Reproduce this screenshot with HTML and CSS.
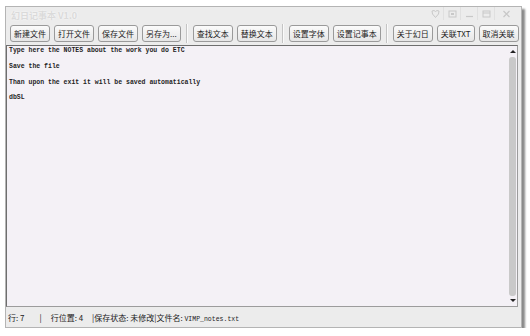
FILE: index.html
```html
<!DOCTYPE html>
<html lang="zh-CN">
<head>
<meta charset="UTF-8">
<title>幻日记事本 V1.0</title>
<link rel="stylesheet" href="styles.css">
</head>
<body>
<div class="window">
  <div class="titlebar">
    <span class="title">幻日记事本 V1.0</span>
    <div class="controls">
      <span class="ctl">
        <svg width="9" height="8" viewBox="0 0 9 8"><path d="M1 1 L3 0.5 L4.5 1.5 L6 0.5 L8 1 L7.5 4 L4.5 7.5 L1.5 4 Z" fill="none" stroke="#c8c8c8" stroke-width="1"/></svg>
      </span>
      <span class="ctl">
        <svg width="9" height="8" viewBox="0 0 9 8"><rect x="1" y="1" width="7" height="6" fill="none" stroke="#c8c8c8"/><rect x="3" y="3" width="3" height="2" fill="#c8c8c8"/></svg>
      </span>
      <span class="ctl">
        <svg width="9" height="8" viewBox="0 0 9 8"><path d="M1 6.5 H8" stroke="#c8c8c8" stroke-width="1.2"/></svg>
      </span>
      <span class="ctl">
        <svg width="9" height="8" viewBox="0 0 9 8"><rect x="1" y="1" width="7" height="6" fill="none" stroke="#c8c8c8"/><path d="M1 3 H8" stroke="#c8c8c8"/></svg>
      </span>
      <span class="ctl close">
        <svg width="9" height="8" viewBox="0 0 9 8"><path d="M1.5 1 L7.5 7 M7.5 1 L1.5 7" stroke="#c8c8c8" stroke-width="1.2"/></svg>
      </span>
    </div>
  </div>

  <div class="toolbar">
    <button class="btn">新建文件</button>
    <button class="btn">打开文件</button>
    <button class="btn">保存文件</button>
    <button class="btn">另存为...</button>
    <span class="sep"></span>
    <button class="btn">查找文本</button>
    <button class="btn">替换文本</button>
    <span class="sep"></span>
    <button class="btn">设置字体</button>
    <button class="btn">设置记事本</button>
    <span class="sep"></span>
    <button class="btn">关于幻日</button>
    <button class="btn">关联TXT</button>
    <button class="btn">取消关联</button>
  </div>

  <div class="editor">
    <div class="text">
      <p>Type here the NOTES about the work you do ETC</p>
      <p>Save the file</p>
      <p>Than upon the exit it will be saved automatically</p>
      <p>dbSL</p>
    </div>
    <div class="scrollbar">
      <span class="arrow up"></span>
      <span class="thumb"></span>
      <span class="arrow down"></span>
    </div>
  </div>

  <div class="statusbar">
    <span>行: 7</span>
    <span class="bar">|</span>
    <span>行位置: 4</span>
    <span class="info">|保存状态: 未修改|文件名: <span class="mono">VIMP_notes.txt</span></span>
  </div>
</div>
</body>
</html>
```

FILE: styles.css
```css
body {
  margin: 0;
  background: #ffffff;
  font-family: "Noto Sans CJK SC", "Liberation Sans", sans-serif;
  color: #222;
}

.window {
  margin: 6px 0 0 5px;
  width: 515px;
  height: 320px;
  border: 1px solid #b4b4b4;
  background: #ececec;
  box-shadow: 3px 3px 2px #8a8a8a;
  display: flex;
  flex-direction: column;
}

.titlebar {
  height: 16px;
  display: flex;
  align-items: center;
  justify-content: space-between;
  padding-left: 5px;
}

.title {
  font-size: 9px;
  font-weight: bold;
  color: #dadada;
  text-shadow: 0 0 2px #fff;
}

.controls {
  display: flex;
  align-self: flex-start;
  margin-right: 4px;
}

.ctl {
  width: 16px;
  height: 13px;
  display: flex;
  align-items: center;
  justify-content: center;
  border-left: 1px solid #e0e0e0;
}

.ctl:first-child {
  border-left: none;
}

.ctl.close {
  width: 22px;
}

.toolbar {
  height: 21px;
  display: flex;
  align-items: center;
  padding-left: 4px;
  gap: 4px;
}

.btn {
  flex-shrink: 0;
  white-space: nowrap;
  height: 17px;
  padding: 0 3px;
  font-family: "Noto Sans CJK SC", "Liberation Sans", sans-serif;
  font-size: 8px;
  line-height: 15px;
  color: #222;
  border: 1px solid #9a9a9a;
  border-radius: 3px;
  background: linear-gradient(#fbfbfb, #e6e6e6);
}

.sep {
  flex-shrink: 0;
  width: 1px;
  height: 19px;
  margin: 0 1px;
  background: #c4c4c4;
  border-right: 1px solid #fafafa;
}

.editor {
  flex: 1;
  margin: 1px 3px 0 0;
  display: flex;
  background: #f4f1f6;
  border-top: 1px solid #6e6e6e;
  border-left: 1px solid #6e6e6e;
  border-bottom: 1px solid #9c9c9c;
  border-right: 1px solid #9c9c9c;
}

.text {
  flex: 1;
  padding: 1px 2px 0;
  font-family: "Liberation Mono", monospace;
  font-size: 6.5px;
  font-weight: bold;
  color: #1e1e1e;
}

.text p {
  margin: 0 0 7.8px;
  line-height: 8px;
}

.scrollbar {
  width: 9px;
  display: flex;
  flex-direction: column;
  align-items: center;
  padding: 4px 0 4px;
}

.thumb {
  flex: 1;
  width: 7px;
  margin: 4px 0 3px;
  background: #c9c9c9;
  border-radius: 3px;
}

.arrow {
  width: 0;
  height: 0;
  border-left: 3px solid transparent;
  border-right: 3px solid transparent;
}

.arrow.up {
  border-bottom: 3px solid #222;
}

.arrow.down {
  border-top: 3px solid #222;
}

.statusbar {
  height: 20px;
  display: flex;
  align-items: center;
  padding-left: 2px;
  font-size: 8px;
  color: #222;
}

.bar {
  margin: 0 9px 0 15px;
}

.info {
  margin-left: 9px;
}

.mono {
  font-family: "Liberation Mono", monospace;
  font-size: 6.5px;
}
```
